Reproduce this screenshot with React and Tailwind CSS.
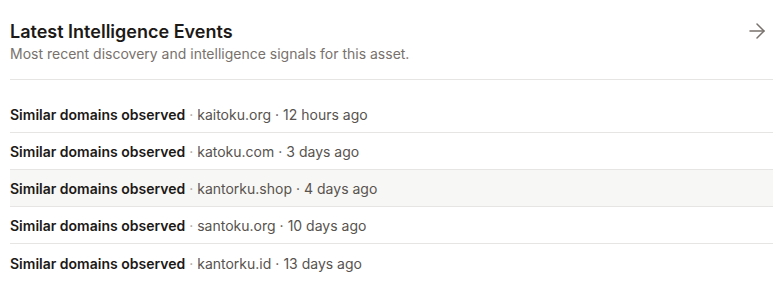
import React from "react";
import { ArrowRight } from "lucide-react";

const EVENTS = [
  { domain: "kaitoku.org", when: "12 hours ago" },
  { domain: "katoku.com", when: "3 days ago" },
  { domain: "kantorku.shop", when: "4 days ago", active: true },
  { domain: "santoku.org", when: "10 days ago" },
  { domain: "kantorku.id", when: "13 days ago" },
];

export default function App() {
  return (
    <div
      className="w-[784px] h-[286px] bg-white pl-[10px] pr-[11px]"
      style={{ fontFamily: "Inter, 'Liberation Sans', sans-serif" }}
    >
      <div className="flex items-start justify-between pt-[18px] pb-[15px] border-b border-[#e7e5e4]">
        <div>
          <h2 className="text-lg leading-7 font-semibold text-[#1c1917]">
            Latest Intelligence Events
          </h2>
          <p className="-mt-[2px] text-sm leading-5 text-[#78716c]">
            Most recent discovery and intelligence signals for this asset.
          </p>
        </div>
        <button className="mt-[1px] mr-[4px] text-[#78716c]">
          <ArrowRight size={24} strokeWidth={1.5} />
        </button>
      </div>

      <ul className="mt-4">
        {EVENTS.map((e, i) => (
          <li
            key={e.domain}
            className={
              "flex items-center h-[37px] pt-[2px] text-sm leading-5 " +
              (i < EVENTS.length - 1 ? "border-b border-[#e7e5e4] " : "") +
              (e.active ? "bg-[#f7f7f5]" : "")
            }
          >
            <span className="font-semibold text-[#1c1917]">Similar domains observed</span>
            <span className="text-[#a8a29e] mx-[4px]">·</span>
            <span className="text-[#57534e]">{e.domain}</span>
            <span className="text-[#57534e] mx-[4px]">·</span>
            <span className="text-[#57534e]">{e.when}</span>
          </li>
        ))}
      </ul>
    </div>
  );
}
